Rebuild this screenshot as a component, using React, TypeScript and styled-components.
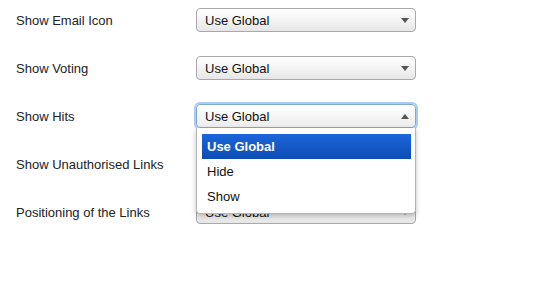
import { FC } from "react";
import styled, { createGlobalStyle, css } from "styled-components";

const GlobalStyle = createGlobalStyle`
  html, body {
    margin: 0;
    padding: 0;
    background: #ffffff;
  }
  body {
    font-family: "Liberation Sans", Arial, sans-serif;
    font-size: 13px;
    color: #222222;
  }
`;

const Form = styled.div`
  display: flex;
  flex-direction: column;
  gap: 24px;
  padding: 8px 16px;
`;

const Row = styled.div`
  display: flex;
  align-items: center;
  height: 24px;
`;

const Label = styled.div`
  width: 180px;
  font-size: 13px;
  color: #222222;
`;

const SelectWrap = styled.div`
  position: relative;
  width: 220px;
`;

const Select = styled.div<{ $open?: boolean }>`
  box-sizing: border-box;
  display: flex;
  align-items: center;
  justify-content: space-between;
  height: 24px;
  padding: 0 6px 0 8px;
  border: 1px solid #a9a9a9;
  border-radius: 4px;
  background: linear-gradient(#ffffff, #f4f4f4 50%, #e6e6e6);
  font-size: 13px;
  color: #111111;

  ${(p) =>
    p.$open &&
    css`
      border-color: #7fa8d9;
      box-shadow: 0 0 0 2px #a9cdf2;
      background: linear-gradient(#ffffff, #f6f6f6 50%, #ececec);
    `}
`;

const Arrow = styled.span<{ $up?: boolean }>`
  width: 0;
  height: 0;
  border-left: 4px solid transparent;
  border-right: 4px solid transparent;
  ${(p) =>
    p.$up
      ? css`
          border-bottom: 5px solid #555555;
        `
      : css`
          border-top: 5px solid #555555;
        `}
`;

const List = styled.div`
  position: absolute;
  left: 0;
  top: 24px;
  z-index: 2;
  box-sizing: border-box;
  width: 220px;
  padding: 6px 4px 4px 5px;
  background: #ffffff;
  border: 1px solid #b5b5b5;
  border-top: none;
  border-radius: 0 0 4px 4px;
  box-shadow: 0 2px 5px rgba(0, 0, 0, 0.25);
`;

const Option = styled.div<{ $active?: boolean }>`
  height: 25px;
  display: flex;
  align-items: center;
  padding: 0 5px;
  font-size: 13px;
  color: #111111;

  ${(p) =>
    p.$active &&
    css`
      background: linear-gradient(#1c66da, #0c4cb3);
      color: #ffffff;
      font-weight: bold;
    `}
`;

const options = ["Use Global", "Hide", "Show"];

const fields = [
  { label: "Show Email Icon", open: false },
  { label: "Show Voting", open: false },
  { label: "Show Hits", open: true },
  { label: "Show Unauthorised Links", open: false },
  { label: "Positioning of the Links", open: false },
];

const Field: FC<{ label: string; open: boolean }> = ({ label, open }) => (
  <Row>
    <Label>{label}</Label>
    <SelectWrap>
      <Select $open={open}>
        <span>Use Global</span>
        <Arrow $up={open} />
      </Select>
      {open && (
        <List>
          {options.map((o, i) => (
            <Option key={o} $active={i === 0}>
              {o}
            </Option>
          ))}
        </List>
      )}
    </SelectWrap>
  </Row>
);

const App: FC = () => (
  <>
    <GlobalStyle />
    <Form>
      {fields.map((f) => (
        <Field key={f.label} label={f.label} open={f.open} />
      ))}
    </Form>
  </>
);

export default App;
